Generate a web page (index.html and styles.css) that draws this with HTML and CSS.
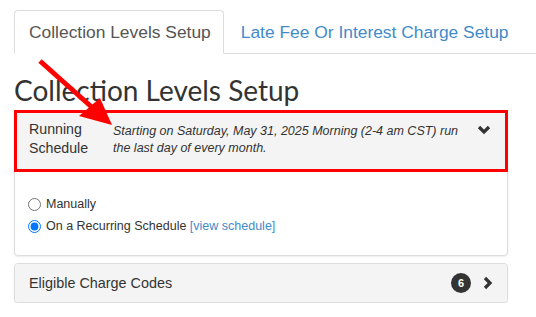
FILE: index.html
```html
<!DOCTYPE html>
<html lang="en">
<head>
    <meta charset="UTF-8">
    <title>Collection Levels Setup</title>
    <link rel="stylesheet" href="styles.css">
</head>
<body>
    <div class="page">
        <ul class="tabs">
            <li class="tab active">Collection Levels Setup</li>
            <li class="tab">Late Fee Or Interest Charge Setup</li>
        </ul>

        <h1 class="page-title">Collection Levels Setup</h1>

        <div class="panel">
            <div class="panel-heading highlight">
                <div class="label">Running<br>Schedule</div>
                <div class="schedule-text">Starting on Saturday, May 31, 2025 Morning (2-4 am CST) run the last day of every month.</div>
                <svg class="chevron" width="14" height="10" viewBox="0 0 14 10">
                    <path d="M2 2 L7 7 L12 2" fill="none" stroke="#333" stroke-width="3.2"/>
                </svg>
            </div>
            <div class="panel-body">
                <label class="radio"><input type="radio" name="run">Manually</label>
                <label class="radio"><input type="radio" name="run" checked>On a Recurring Schedule <a href="#">[view schedule]</a></label>
            </div>
        </div>

        <div class="panel">
            <div class="panel-heading collapsed">
                <div class="title">Eligible Charge Codes</div>
                <span class="badge">6</span>
                <svg class="chevron" width="10" height="14" viewBox="0 0 10 14">
                    <path d="M2 2 L7 7 L2 12" fill="none" stroke="#333" stroke-width="3.2"/>
                </svg>
            </div>
        </div>

        <!-- annotation arrow -->
        <svg class="arrow" width="130" height="140" viewBox="0 0 130 140">
            <line x1="40" y1="61" x2="95" y2="110" stroke="#f00" stroke-width="5"/>
            <polygon points="112,125 79,116 100,98" fill="#f00"/>
        </svg>
    </div>
</body>
</html>
```

FILE: styles.css
```css
body {
    margin: 0;
    font-family: 'Liberation Sans', Arial, sans-serif;
    color: #333;
    background: #fff;
}

.page {
    position: relative;
    padding: 10px 0 0 14px;
}

.tabs {
    display: flex;
    list-style: none;
    margin: 0;
    padding: 0;
    border-bottom: 1px solid #ddd;
}

.tab {
    font-size: 17.4px;
    line-height: 42px;
    padding: 0 12px 0 14px;
    margin-right: 2px;
    margin-bottom: -1px;
    color: #428bca;
    border: 1px solid transparent;
    border-radius: 4px 4px 0 0;
}

.tab.active {
    color: #555;
    background: #fff;
    border-color: #ddd;
    border-bottom-color: #fff;
}

.page-title {
    font-family: 'Lato', sans-serif;
    font-weight: normal;
    font-size: 28px;
    line-height: 36px;
    margin: 18px 0 0;
    color: #333;
}

.panel {
    width: 492px;
    background: #fff;
    border: 1px solid #ddd;
    border-radius: 4px;
    box-shadow: 0 1px 2px rgba(0, 0, 0, 0.08);
    margin-top: 2px;
}

.panel + .panel {
    margin-top: 7px;
}

.panel-heading {
    display: flex;
    align-items: flex-start;
    background: #f4f4f4;
    font-size: 14.2px;
}

.panel-heading.highlight {
    margin: -1px -1px 0;
    border: 3px solid #f00;
    padding: 7px 12px 11px;
    line-height: 19px;
}

.panel-heading.collapsed {
    align-items: center;
    padding: 0 14px;
    height: 38px;
    border-radius: 4px;
}

.label {
    width: 84px;
}

.schedule-text {
    flex: 1;
    font-style: italic;
    font-size: 12.5px;
    line-height: 16.5px;
    padding-top: 3px;
    padding-right: 10px;
}

.panel-heading.highlight .chevron {
    margin-top: 5px;
    margin-right: 2px;
}

.title {
    flex: 1;
    font-size: 14.4px;
}

.badge {
    width: 20px;
    height: 20px;
    border-radius: 50%;
    background: #333;
    color: #fff;
    font-size: 11px;
    font-weight: bold;
    text-align: center;
    line-height: 20px;
    margin-right: 12px;
}

.panel-body {
    padding: 21px 13px 18px;
    font-size: 12.5px;
}

.radio {
    display: flex;
    align-items: center;
    height: 22px;
    white-space: pre;
}

.radio input {
    margin: 0 5px 0 0;
    width: 13px;
    height: 13px;
}

.radio a {
    color: #428bca;
    text-decoration: none;
}

.arrow {
    position: absolute;
    left: 0;
    top: 0;
}
```
